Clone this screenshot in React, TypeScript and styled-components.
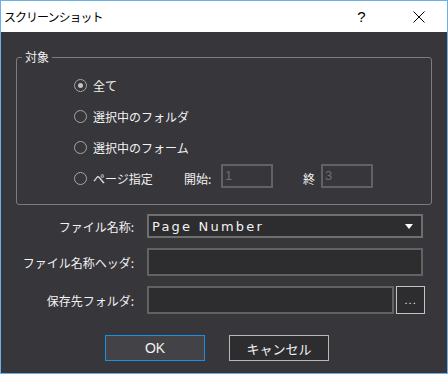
import React from "react";
import styled, { createGlobalStyle } from "styled-components";

const GlobalStyle = createGlobalStyle`
  html, body {
    margin: 0;
    padding: 0;
    background: #ffffff;
  }
  * {
    box-sizing: border-box;
  }
`;

const jp = `"Noto Sans CJK JP", "Noto Sans", sans-serif`;

const Window = styled.div`
  width: 448px;
  height: 374px;
  border: 1px solid #6cb0ea;
  display: flex;
  flex-direction: column;
  background: #37363b;
  font-family: ${jp};
  font-size: 12px;
  color: #f2f2f2;
  overflow: hidden;
`;

const TitleBar = styled.div`
  height: 31px;
  flex-shrink: 0;
  background: #ffffff;
  display: flex;
  align-items: center;
  padding-left: 3px;
  color: #000000;
`;

const Title = styled.span`
  font-size: 12px;
  letter-spacing: -1px;
`;

const CaptionButton = styled.div<{ $first?: boolean }>`
  width: 57px;
  height: 31px;
  display: flex;
  align-items: center;
  justify-content: center;
  margin-left: ${(p) => (p.$first ? "auto" : "0")};
  font-family: "Liberation Sans", sans-serif;
  font-size: 15px;
`;

const Body = styled.div`
  flex: 1;
  padding: 18px 0 0 15px;
  display: flex;
  flex-direction: column;
`;

const GroupBox = styled.fieldset`
  width: 416px;
  margin: 0;
  padding: 6px 0 10px 0;
  border: 1px solid #7c7c7c;
  border-radius: 3px;
  min-width: 0;
`;

const GroupTitle = styled.legend`
  margin-left: 5px;
  padding: 0 3px;
  line-height: 14px;
  font-size: 12px;
`;

const RadioList = styled.div`
  padding-left: 57px;
  display: flex;
  flex-direction: column;
`;

const RadioRow = styled.div`
  height: 31px;
  display: flex;
  align-items: center;
`;

const RadioOption = styled.label<{ $width?: number }>`
  display: flex;
  align-items: center;
  width: ${(p) => (p.$width ? `${p.$width}px` : "auto")};
  flex-shrink: 0;
`;

const RadioCircle = styled.span<{ $checked?: boolean }>`
  width: 13px;
  height: 13px;
  border-radius: 50%;
  border: 1px solid #a6a6a6;
  margin-right: 6px;
  display: flex;
  align-items: center;
  justify-content: center;

  &::after {
    content: "";
    width: 5px;
    height: 5px;
    border-radius: 50%;
    background: #c4c4c4;
    display: ${(p) => (p.$checked ? "block" : "none")};
  }
`;

const RangeLabel = styled.span<{ $width: number; $ml?: number }>`
  width: ${(p) => p.$width}px;
  margin-left: ${(p) => p.$ml ?? 0}px;
  flex-shrink: 0;
`;

const RangeInput = styled.div`
  width: 52px;
  height: 24px;
  border: 2px solid #626262;
  margin-bottom: 6px;
  color: #6e6e6e;
  padding-left: 2px;
  display: flex;
  align-items: center;
  font-family: "Liberation Sans", sans-serif;
  font-size: 13px;
`;

const FormGrid = styled.div`
  margin: 9px 0 0 1px;
  display: grid;
  grid-template-columns: 117px 278px;
  column-gap: 13px;
  row-gap: 10px;
  align-items: center;
`;

const FieldLabel = styled.span`
  text-align: right;
  white-space: nowrap;
`;

const Combo = styled.div`
  width: 276px;
  height: 24px;
  border: 2px solid #6e6e6e;
  background: #2d2d30;
  display: flex;
  align-items: center;
  justify-content: space-between;
  padding: 0 8px 0 3px;
  font-family: "DejaVu Sans", sans-serif;
  font-size: 13px;
  letter-spacing: 2.2px;
`;

const ComboArrow = styled.span`
  width: 0;
  height: 0;
  border-left: 4px solid transparent;
  border-right: 4px solid transparent;
  border-top: 5px solid #ffffff;
`;

const TextBox = styled.div<{ $width?: number }>`
  width: ${(p) => (p.$width ? `${p.$width}px` : "276px")};
  height: 28px;
  border: 2px solid #626262;
  background: #2d2d30;
`;

const FolderField = styled.div`
  display: flex;
  gap: 2px;
`;

const BrowseButton = styled.div`
  width: 29px;
  height: 28px;
  border: 1px solid #c4c4c4;
  background: #2d2d30;
  display: flex;
  align-items: flex-end;
  justify-content: center;
  padding-bottom: 7px;
  font-family: "Liberation Sans", sans-serif;
  font-size: 11px;
  line-height: 1;
  letter-spacing: 1px;
`;

const ButtonRow = styled.div`
  margin: 21px 0 0 89px;
  display: flex;
  gap: 24px;
`;

const DialogButton = styled.div<{ $primary?: boolean }>`
  width: 100px;
  height: 26px;
  display: flex;
  align-items: center;
  justify-content: center;
  border: 1px solid ${(p) => (p.$primary ? "#1a8fe3" : "#b8b8b8")};
  background: ${(p) => (p.$primary ? "#434247" : "#2d2d30")};
  font-size: 13px;
`;

const OkText = styled.span`
  font-family: "Liberation Sans", sans-serif;
  font-size: 14px;
  font-weight: 400;
`;

export default function App() {
  return (
    <>
      <GlobalStyle />
      <Window>
        <TitleBar>
          <Title>スクリーンショット</Title>
          <CaptionButton $first>?</CaptionButton>
          <CaptionButton>
            <svg width="12" height="12" viewBox="0 0 12 12">
              <path d="M0.5 0.5 L11.5 11.5 M11.5 0.5 L0.5 11.5" stroke="#000" strokeWidth="1" />
            </svg>
          </CaptionButton>
        </TitleBar>
        <Body>
          <GroupBox>
            <GroupTitle>対象</GroupTitle>
            <RadioList>
              <RadioRow>
                <RadioOption>
                  <RadioCircle $checked />
                  全て
                </RadioOption>
              </RadioRow>
              <RadioRow>
                <RadioOption>
                  <RadioCircle />
                  選択中のフォルダ
                </RadioOption>
              </RadioRow>
              <RadioRow>
                <RadioOption>
                  <RadioCircle />
                  選択中のフォーム
                </RadioOption>
              </RadioRow>
              <RadioRow>
                <RadioOption $width={110}>
                  <RadioCircle />
                  ページ指定
                </RadioOption>
                <RangeLabel $width={37}>開始:</RangeLabel>
                <RangeInput>1</RangeInput>
                <RangeLabel $width={18} $ml={30}>
                  終
                </RangeLabel>
                <RangeInput>3</RangeInput>
              </RadioRow>
            </RadioList>
          </GroupBox>
          <FormGrid>
            <FieldLabel>ファイル名称:</FieldLabel>
            <Combo>
              <span>Page Number</span>
              <ComboArrow />
            </Combo>
            <FieldLabel>ファイル名称ヘッダ:</FieldLabel>
            <TextBox />
            <FieldLabel>保存先フォルダ:</FieldLabel>
            <FolderField>
              <TextBox $width={249} />
              <BrowseButton>...</BrowseButton>
            </FolderField>
          </FormGrid>
          <ButtonRow>
            <DialogButton $primary>
              <OkText>OK</OkText>
            </DialogButton>
            <DialogButton>キャンセル</DialogButton>
          </ButtonRow>
        </Body>
      </Window>
    </>
  );
}
